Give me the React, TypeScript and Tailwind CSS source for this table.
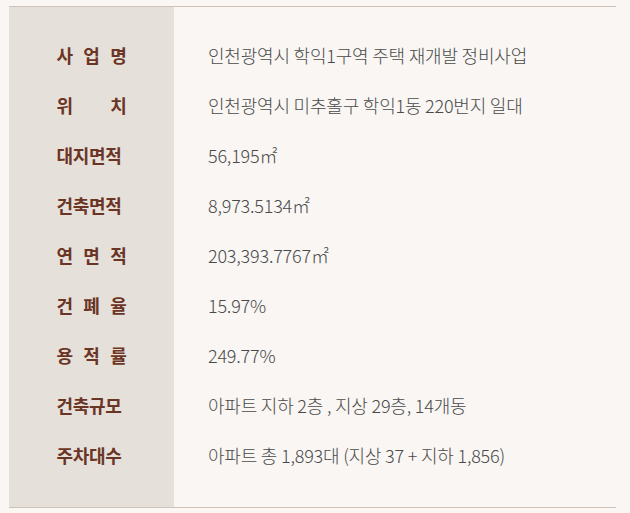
import React from "react";

const rows: [string, string][] = [
  ["사 업 명", "인천광역시 학익1구역 주택 재개발 정비사업"],
  ["위 치", "인천광역시 미추홀구 학익1동 220번지 일대"],
  ["대지면적", "56,195㎡"],
  ["건축면적", "8,973.5134㎡"],
  ["연 면 적", "203,393.7767㎡"],
  ["건 폐 율", "15.97%"],
  ["용 적 률", "249.77%"],
  ["건축규모", "아파트 지하 2층 , 지상 29층, 14개동"],
  ["주차대수", "아파트 총 1,893대 (지상 37 + 지하 1,856)"],
];

export default function App() {
  return (
    <div
      className="w-[630px] h-[513px] bg-[#f9f6f3] pt-[6px] pl-[9px] pr-[14px]"
      style={{ fontFamily: '"Noto Sans CJK KR", "Noto Sans", sans-serif' }}
    >
      <div className="flex border-t border-b border-[#cfc3b8]">
        <div className="w-[165px] bg-[#e6e0da] pt-[23px] pb-[27px]">
          {rows.map(([label]) => (
            <div key={label} className="h-[50px] flex items-center justify-center">
              <span className="inline-block w-[70px] text-[18px] font-bold tracking-[-0.3px] text-[#6b3526] [text-align-last:justify] whitespace-nowrap">
                {label}
              </span>
            </div>
          ))}
        </div>
        <div className="flex-1 pt-[23px] pb-[27px] pl-[34px]">
          {rows.map(([label, value]) => (
            <div
              key={label}
              className="h-[50px] flex items-center text-[18px] font-light text-[#4a4a4a] tracking-[-0.2px] whitespace-nowrap"
            >
              {value}
            </div>
          ))}
        </div>
      </div>
    </div>
  );
}
